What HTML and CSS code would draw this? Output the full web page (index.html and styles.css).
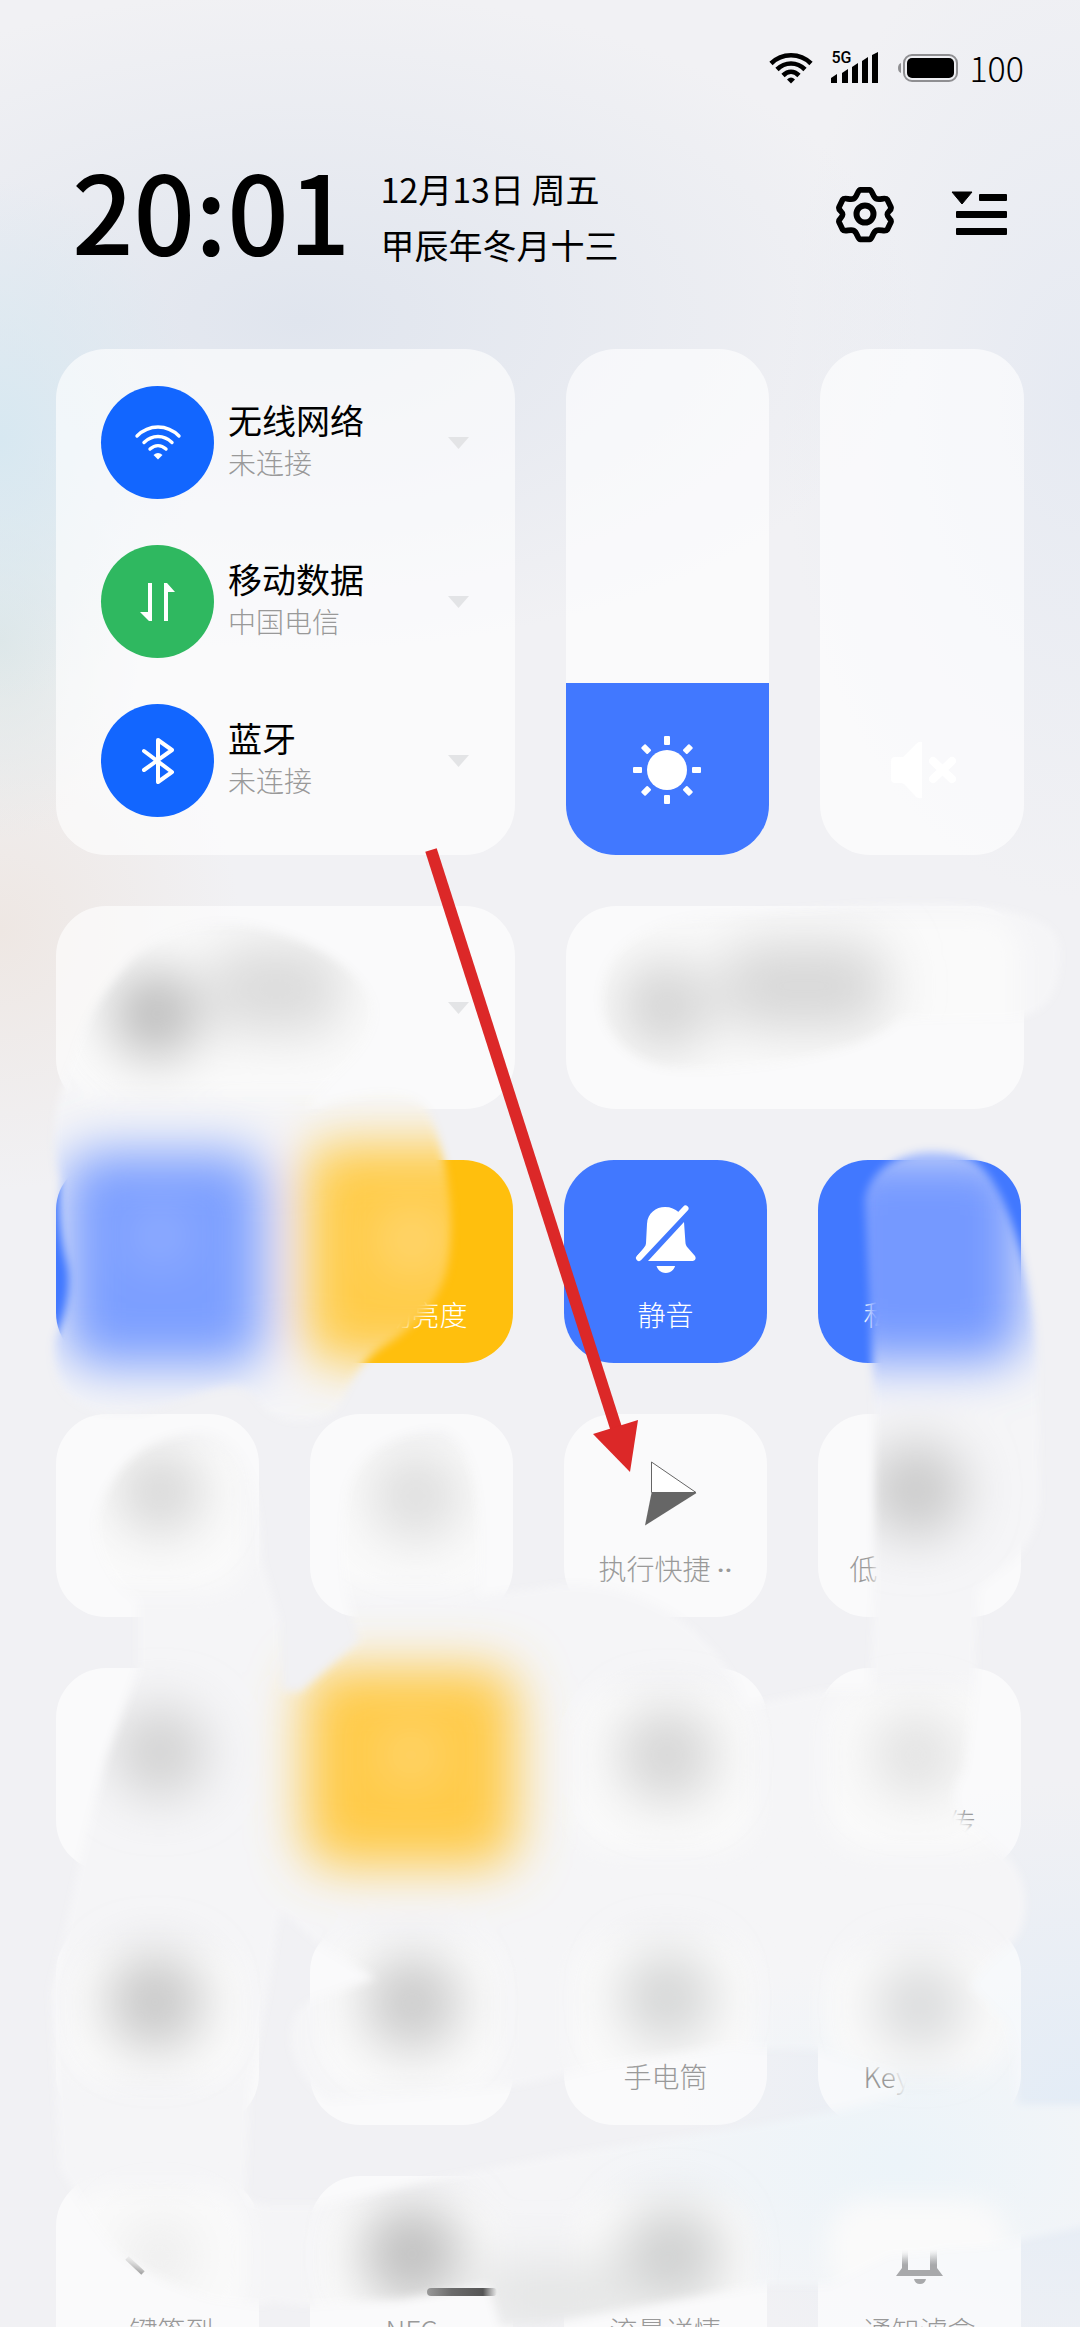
FILE: index.html
```html
<!DOCTYPE html>
<html lang="zh-CN">
<head>
<meta charset="utf-8">
<meta name="viewport" content="width=device-width, initial-scale=1">
<title>控制中心</title>
<link rel="stylesheet" href="styles.css">
</head>
<body>
<main class="screen">
  <div class="status">
    <svg class="status-wifi" viewBox="0 0 44 32" width="44" height="32" fill="none" stroke="#000" stroke-width="4.6"><path d="M2 11.500C13 .5 31 .5 42 11.500M8 17.500C16 9.500 28 9.500 36 17.500M14 23.500C19 18.500 25 18.500 30 23.500"/><path d="M18 27.500q4-4 8 0l-4 4z" fill="#000" stroke="none"/></svg>
    <div class="signal">
      <span class="signal-type">5G</span>
      <svg viewBox="0 0 48 32" width="48" height="32"><path d="M0 26l6-4v9H0zM11 21l6-4v14h-6zM21 15l6-4v20h-6zM31 9l6-4v26h-6zM41 3l6-3v31h-6z"/></svg>
    </div>
    <svg viewBox="0 0 62 32" width="62" height="32"><rect x="7" y="3" width="53" height="26" rx="8" fill="none" stroke="#8f8f92" stroke-width="2"/><rect x="10" y="6" width="47" height="20" rx="5"/><path d="M4 11v10q-3-1-3-5t3-5z" fill="#8f8f92"/></svg>
    <span class="level">100</span>
  </div>

  <header class="header">
    <time class="clock">20:01</time>
    <div class="date"><span>12月13日 周五</span><span>甲辰年冬月十三</span></div>
    <div class="actions">
      <button class="icon-button" aria-label="设置"><svg viewBox="0 0 58 58" width="58" height="58" fill="none" stroke="#000" stroke-width="6" stroke-linejoin="round"><path d="M24 4h10c3 0 3 7 7 9s10-2 12 1l4 8c1 3-4 4-4 7.500s5 4.500 4 7.500l-4 8c-2 3-8-1-12 1s-4 9-7 9H24c-3 0-3-7-7-9s-10 2-12-1l-4-8c-1-3 4-4 4-7.500S0 25 1 22l4-8c2-3 8 1 12-1s4-9 7-9z" transform="translate(2 0) scale(.93 .97)"/><circle cx="29" cy="28" r="8.500"/></svg></button>
      <button class="icon-button" aria-label="编辑"><svg viewBox="0 0 58 58" width="58" height="58"><path d="M2 6h20L12 18z" stroke="#000" stroke-linejoin="round"/><rect x="29" y="8" width="28" height="7" rx="1"/><rect x="6" y="25" width="51" height="7" rx="1"/><rect x="6" y="42" width="51" height="7" rx="1"/></svg></button>
    </div>
  </header>

  <section class="controls">
    <div class="card network">
      <div class="net-row">
        <button class="round blue" aria-label="无线网络"><svg viewBox="0 0 48 48" width="48" height="48" fill="none" stroke="#fff" stroke-width="3.400" stroke-linecap="round"><path d="M3 17C15 5 33 5 45 17M10 23.500c8-8 20-8 28 0M16 30c5-4.500 11-4.500 16 0"/><path d="M19.500 36q4.500-4 9 0L24 40.500z" fill="#fff" stroke="none"/></svg></button>
        <div class="net-text"><span class="net-name">无线网络</span><span class="net-state">未连接</span></div>
        <svg class="caret" viewBox="0 0 21 12" width="21" height="12"><path d="M0 0h21L10.500 12z"/></svg>
      </div>
      <div class="net-row">
        <button class="round green" aria-label="移动数据"><svg viewBox="0 0 48 48" width="48" height="48" fill="#fff"><path d="M14 5h4v38h-3L6 34h8zM30 43h4V14h7L33 5h-3z"/></svg></button>
        <div class="net-text"><span class="net-name">移动数据</span><span class="net-state">中国电信</span></div>
        <svg class="caret" viewBox="0 0 21 12" width="21" height="12"><path d="M0 0h21L10.500 12z"/></svg>
      </div>
      <div class="net-row">
        <button class="round blue" aria-label="蓝牙"><svg viewBox="0 0 48 48" width="48" height="48" fill="none" stroke="#fff" stroke-width="4" stroke-linecap="round" stroke-linejoin="round"><path d="M10 14l28 21-14 10V3l14 10-28 20"/></svg></button>
        <div class="net-text"><span class="net-name">蓝牙</span><span class="net-state">未连接</span></div>
        <svg class="caret" viewBox="0 0 21 12" width="21" height="12"><path d="M0 0h21L10.500 12z"/></svg>
      </div>
    </div>
    <div class="sliders">
      <div class="card slider">
        <input class="range range-bright" type="range" min="0" max="100" value="34" aria-label="亮度">
        <svg class="slider-icon" viewBox="-34 -34 68 68" width="68" height="68" fill="#fff"><circle r="20"/><g id="rays"><rect x="-3" y="-34" width="6" height="9" rx="1"/><rect x="-3" y="25" width="6" height="9" rx="1"/><rect x="-34" y="-3" width="9" height="6" rx="1"/><rect x="25" y="-3" width="9" height="6" rx="1"/></g><use href="#rays" transform="rotate(45)"/></svg>
      </div>
      <div class="card slider">
        <input class="range" type="range" min="0" max="100" value="0" aria-label="音量">
        <svg class="slider-icon" viewBox="-34 -34 68 68" width="68" height="68" fill="#fff"><path d="M-31-9q0-4 4-4h8L-6-26q3-3 6-2v56q-3 1-6-1l-11-12q-2-2-4-2h-6q-4 0-4-4z"/><path d="M11-9l19 18M30-9L11 9" stroke="#fff" stroke-width="8" stroke-linecap="round"/></svg>
      </div>
    </div>
  </section>

  <section class="media">
    <div class="card media-card"><svg class="caret" viewBox="0 0 21 12" width="21" height="12"><path d="M0 0h21L10.500 12z"/></svg></div>
    <div class="card media-card"></div>
  </section>

  <section class="tiles">
    <button class="card tile on"></button>
    <button class="card tile warm"><span class="tile-icon"></span><span>自动亮度</span></button>
    <button class="card tile on">
      <svg class="tile-icon" viewBox="0 0 68 68" fill="#fff"><path d="M15 19C15.500 8 24 2 33 2c6 0 10 2 13.500 5l4 1L9 53l-4-2 6-7c2.500-3 2.800-4 3-6z"/><path d="M53.500 3.500L7 53" stroke="#fff" stroke-width="6" stroke-linecap="round"/><path d="M52 17L16 56h45q4-1 2-5l-7-8c-2-2-2.500-4-2.600-6zM24.500 61h18.600c-1 4-5 7-9.300 7s-8.300-3-9.300-7z"/></svg>
      <span>静音</span>
    </button>
    <button class="card tile on"><span class="tile-icon"></span><span class="span-4">私</span></button>

    <button class="card tile"></button>
    <button class="card tile"></button>
    <button class="card tile">
      <svg class="tile-icon" viewBox="0 0 68 68"><path d="M19.500 3v30.500H64z" fill="#fff" stroke="#666"/><path d="M19.500 34H64.500L13 66.500z" fill="#666"/></svg>
      <span>执行快捷 <span class="dots">··</span></span>
    </button>
    <button class="card tile"><span class="tile-icon"></span><span class="span-5">低</span></button>

    <button class="card tile"></button>
    <button class="card tile warm"></button>
    <button class="card tile"></button>
    <button class="card tile"><span class="tile-icon"></span><span class="span-4 end">传</span></button>

    <button class="card tile"></button>
    <button class="card tile"></button>
    <button class="card tile"><span class="tile-icon"></span><span>手电筒</span></button>
    <button class="card tile"><span class="tile-icon"></span><span class="span-4">Key</span></button>

    <button class="card tile">
      <svg class="tile-icon" viewBox="0 0 68 68"><path d="M3 37l16 15" stroke="url(#fade)" stroke-width="5"/></svg>
      <span>一键签到</span>
    </button>
    <button class="card tile"><span class="tile-icon"></span><span>NFC</span></button>
    <button class="card tile"><span class="tile-icon"></span><span>流量详情</span></button>
    <button class="card tile">
      <svg class="tile-icon" viewBox="0 0 68 68" fill="url(#fade-bell)"><path d="M16 28h6v21h22V28h7v19l6 8H10l6-8zM28 58h12q-1 5-6 5t-6-5z"/></svg>
      <span>通知滤盒</span>
    </button>
  </section>

  <svg class="overlay" viewBox="0 0 1080 2327" preserveAspectRatio="xMidYMin meet" aria-hidden="true">
    <defs>
      <linearGradient id="fade" gradientUnits="userSpaceOnUse" x1="0" y1="34" x2="14" y2="54"><stop offset="0" stop-color="#ddd"/><stop offset="1" stop-color="#999"/></linearGradient>
      <linearGradient id="fade-bell" gradientUnits="userSpaceOnUse" x1="0" y1="28" x2="0" y2="44"><stop offset="0" stop-color="#a8a9ab" stop-opacity="0"/><stop offset="1" stop-color="#a8a9ab"/></linearGradient>
      <linearGradient id="bar"><stop offset="0" stop-color="#999"/><stop offset=".35" stop-color="#6b6b6b"/><stop offset=".8" stop-color="#555"/><stop offset="1" stop-color="#555" stop-opacity="0"/></linearGradient>
      <radialGradient id="cool"><stop offset="0" stop-color="#ecf4f9"/><stop offset="1" stop-color="#ecf4f9" stop-opacity="0"/></radialGradient>
      <filter id="edge" filterUnits="userSpaceOnUse" x="0" y="850" width="1080" height="1477"><feGaussianBlur stdDeviation="4"/></filter>
      <filter id="soft" filterUnits="userSpaceOnUse" x="0" y="800" width="1080" height="1527"><feGaussianBlur stdDeviation="12"/></filter>
      <filter id="deep" filterUnits="userSpaceOnUse" x="0" y="800" width="1080" height="1527"><feGaussianBlur stdDeviation="26"/></filter>
      <mask id="strokes" maskUnits="userSpaceOnUse" x="0" y="850" width="1080" height="1477">
        <g fill="#fff" filter="url(#edge)">
          <path d="M130 960C165 925 215 918 250 925C305 935 370 970 375 1010C375 1060 300 1095 312 1110C330 1098 415 1075 430 1115C445 1150 452 1200 451 1230C450 1270 445 1300 400 1335C380 1350 365 1350 340 1405C320 1430 270 1425 258 1400C240 1370 190 1400 150 1410C100 1420 48 1410 54 1340C68 1310 72 1280 66 1260C60 1235 58 1210 60 1180C46 1130 60 1090 72 1060C85 1020 95 1000 130 960z"/>
          <path d="M600 1000C600 940 660 915 720 915L860 905C960 900 1060 905 1060 950C1062 1000 1040 1020 1000 1018L900 1020C860 1060 720 1075 680 1070C640 1070 600 1040 600 1000z"/>
          <path d="M865 1200C870 1165 910 1150 932 1151C970 1151 985 1165 1000 1195C1022 1240 1040 1320 1038 1390L1040 1500C1036 1560 1000 1565 978 1590L975 1690L965 1770C950 1790 950 1815 975 1828L1008 1857C1030 1880 1030 1920 1015 1940C990 1960 970 1980 972 1988L1005 2020C1020 2050 1015 2080 1018 2105L1090 2105L1090 2225L1020 2240C980 2252 940 2245 934 2252L890 2255L830 2285L768 2285L720 2293L540 2325L500 2327L488 2285L400 2300L300 2306L262 2300L265 2205L320 2205L440 2178L560 2155L760 2125L850 2108L900 2095L896 2075L818 2050L740 2048V1940L870 1880V1690L874 1590V1400z"/>
          <path d="M95 1520C115 1450 160 1435 200 1432C250 1435 262 1500 262 1560L280 1620L284 1880L270 1980L250 2090L246 2200L268 2205L268 2306L215 2300C180 2290 150 2275 120 2255C95 2230 75 2190 60 2170L50 1990L65 1930L80 1860L105 1760L138 1668V1600C120 1590 95 1560 95 1520z"/>
          <path d="M345 1500C350 1450 400 1430 440 1430C490 1440 480 1560 480 1595L540 1588C600 1575 690 1600 735 1680L745 1706L825 1690L900 1690V1880L740 1940V2045L605 2065L520 2085L420 2095L330 2100C290 2080 275 2020 310 2000L375 1978L320 1945L280 1910L278 1690L300 1692L360 1640C340 1590 340 1540 345 1500z"/>
        </g>
      </mask>
    </defs>
    <g mask="url(#strokes)">
      <path fill="#f5f5f7" d="M0 850h1080v1477H0z"/>
      <ellipse cx="900" cy="2160" rx="330" ry="200" fill="url(#cool)"/>
      <g fill="#fafafa" filter="url(#soft)">
        <rect x="60" y="920" width="450" height="176" rx="40"/><rect x="570" y="914" width="450" height="186" rx="40"/>
        <rect x="66" y="1440" width="180" height="150" rx="40"/><rect x="320" y="1440" width="180" height="150" rx="40"/>
        <rect x="574" y="1690" width="180" height="160" rx="40"/><rect x="828" y="1690" width="180" height="160" rx="40"/>
        <rect x="66" y="1950" width="180" height="130" rx="40"/><rect x="320" y="1940" width="180" height="150" rx="40"/><rect x="574" y="1940" width="180" height="150" rx="40"/><rect x="828" y="1950" width="180" height="120" rx="40"/>
        <rect x="66" y="2190" width="180" height="140" rx="40"/><rect x="320" y="2200" width="180" height="130" rx="40"/><rect x="574" y="2200" width="180" height="130" rx="40"/><rect x="828" y="2200" width="180" height="100" rx="40"/>
      </g>
      <g filter="url(#deep)">
        <rect x="64" y="1152" width="200" height="214" rx="30" fill="#7b9fff"/><circle cx="160" cy="1236" r="26" fill="#9ab3ff"/>
        <rect x="304" y="1144" width="214" height="218" rx="30" fill="#ffcc4a"/><circle cx="412" cy="1240" r="26" fill="#ffdc80"/>
        <rect x="826" y="1152" width="196" height="210" rx="30" fill="#7599ff"/>
        <rect x="304" y="1668" width="212" height="198" rx="30" fill="#ffcb48"/><circle cx="411" cy="1755" r="22" fill="#ffdc80"/>
        <circle cx="155" cy="1014" r="44" fill="#bbb"/><rect x="210" y="944" width="132" height="90" rx="30" fill="#dcdcdc"/>
        <circle cx="665" cy="1006" r="46" fill="#d4d4d4"/><rect x="722" y="942" width="164" height="88" rx="30" fill="#d8d8d8"/>
        <circle cx="160" cy="1492" r="42" fill="#d6d6d6"/><circle cx="416" cy="1496" r="46" fill="#dedede"/><circle cx="916" cy="1490" r="48" fill="#cacaca"/>
        <circle cx="160" cy="1752" r="46" fill="#d2d2d2"/><circle cx="667" cy="1755" r="48" fill="#d5d5d5"/><circle cx="916" cy="1755" r="44" fill="#e2e2e2"/>
        <circle cx="155" cy="2002" r="48" fill="#c8c8c8"/><circle cx="412" cy="2003" r="48" fill="#cacaca"/><circle cx="667" cy="1998" r="46" fill="#d4d5d5"/><circle cx="920" cy="2006" r="44" fill="#d9dadb"/>
        <circle cx="160" cy="2256" r="36" fill="#ececec"/><circle cx="412" cy="2254" r="50" fill="#c0c0c0"/><circle cx="672" cy="2256" r="50" fill="#cfd0d0"/><path d="M480 2262h150v70H480z" fill="#e4e5e5"/>
      </g>
    </g>
    <rect x="427" y="2288" width="70" height="8" rx="4" fill="url(#bar)"/>
    <path d="M431 850L616 1428" stroke="#dc2828" stroke-width="12"/>
    <path d="M593 1434l45-14-8 52z" fill="#dc2828"/>
  </svg>
</main>
</body>
</html>
```
FILE: styles.css
```css
* { box-sizing: border-box; }

html, body { height: 100%; }

body {
  margin: 0;
  overflow: hidden;
  color: #000;
  font-family: "Noto Sans CJK SC", "Noto Sans", sans-serif;
  font-weight: 300;
}

button {
  border: 0;
  padding: 0;
  background: none;
  color: inherit;
  font: inherit;
}

svg { display: block; flex: none; }

.screen {
  position: relative;
  height: 100%;
  overflow: hidden;
  padding: 0 56px;
  background:
    radial-gradient(ellipse 200px 260px at 0 440px, #d7e8f1, transparent),
    radial-gradient(ellipse 140px 200px at 0 640px, #dfe7e7, transparent),
    radial-gradient(ellipse 240px 260px at 0 930px, #eee7e3, transparent),
    radial-gradient(ellipse 620px 330px at 300px 320px, #e0e5ee, transparent),
    radial-gradient(ellipse 300px 500px at 1080px 400px, #e6eaf2, transparent),
    radial-gradient(ellipse 400px 330px at 1080px 2110px, #e3ecf6, transparent),
    #f1f1f4;
}

.status {
  display: flex;
  align-items: center;
  justify-content: flex-end;
  height: 136px;
}

.signal {
  position: relative;
  margin: 0 18px;
}

.signal-type {
  position: absolute;
  left: 0;
  top: -4px;
  font: 500 16px/20px Roboto, sans-serif;
}

.level {
  margin-left: 10px;
  font-size: 34px;
  line-height: 40px;
}

.header {
  display: flex;
  align-items: center;
  height: 162px;
  margin-bottom: 51px;
  padding: 0 16px;
}

.clock {
  padding-bottom: 18px;
  font-size: 108px;
  font-weight: 500;
  line-height: 144px;
}

.date {
  display: flex;
  flex: 1;
  flex-direction: column;
  margin-left: 30px;
  font-size: 34px;
  font-weight: 400;
  line-height: 56px;
}

.actions {
  display: flex;
  gap: 56px;
  padding-bottom: 4px;
}

.card {
  border-radius: 50px;
  background: rgba(255, 255, 255, 0.62);
}

.controls, .media {
  display: grid;
  grid-template-columns: 1fr 1fr;
  gap: 51px;
  margin-bottom: 51px;
}

.network {
  display: flex;
  flex-direction: column;
  gap: 46px;
  padding: 37px 46px 38px 45px;
}

.net-row { display: flex; align-items: center; }

.round {
  display: flex;
  align-items: center;
  justify-content: center;
  width: 113px;
  height: 113px;
  border-radius: 50%;
}

.blue { background: #1266ff; }

.green { background: #2fb860; }

.net-text {
  display: flex;
  flex: 1;
  flex-direction: column;
  margin-left: 14px;
  padding-bottom: 4px;
  line-height: 42px;
}

.net-name { font-size: 34px; font-weight: 400; }

.net-state { color: #999; font-size: 28px; }

.caret { fill: #e3e4e6; }

.sliders {
  display: grid;
  grid-template-columns: 1fr 1fr;
  gap: 51px;
}

.slider {
  position: relative;
  overflow: hidden;
}

.range {
  position: absolute;
  inset: 0;
  width: 100%;
  height: 100%;
  margin: 0;
  appearance: none;
  background: transparent;
  writing-mode: vertical-lr;
  direction: rtl;
}

.range::-webkit-slider-thumb { appearance: none; width: 0; height: 0; }

.range-bright { background: linear-gradient(to top, #4178ff 34%, transparent 34%); }

.slider-icon {
  position: absolute;
  bottom: 51px;
  left: calc(50% - 34px);
  pointer-events: none;
}

.media-card {
  display: flex;
  align-items: center;
  justify-content: flex-end;
  height: 203px;
  padding-right: 46px;
}

.tiles {
  display: grid;
  grid-template-columns: repeat(4, 1fr);
  gap: 51px;
  padding-right: 3px;
}

.tile {
  display: flex;
  flex-direction: column;
  align-items: center;
  gap: 21px;
  height: 203px;
  padding-top: 45px;
  color: #999;
  font-size: 28px;
  line-height: 40px;
  white-space: nowrap;
}

.tile-icon { width: 68px; height: 68px; flex: none; }

.on { background: #4178ff; color: #fff; }

.warm { background: #ffbf0d; color: #fff; }

.span-4 { width: 4em; text-align: left; }

.span-5 { width: 5em; text-align: left; }

.end { text-align: right; }

.dots { font-family: Roboto, sans-serif; font-weight: 500; }

.overlay {
  position: absolute;
  top: 0;
  left: 0;
  width: 100%;
  pointer-events: none;
}
```
